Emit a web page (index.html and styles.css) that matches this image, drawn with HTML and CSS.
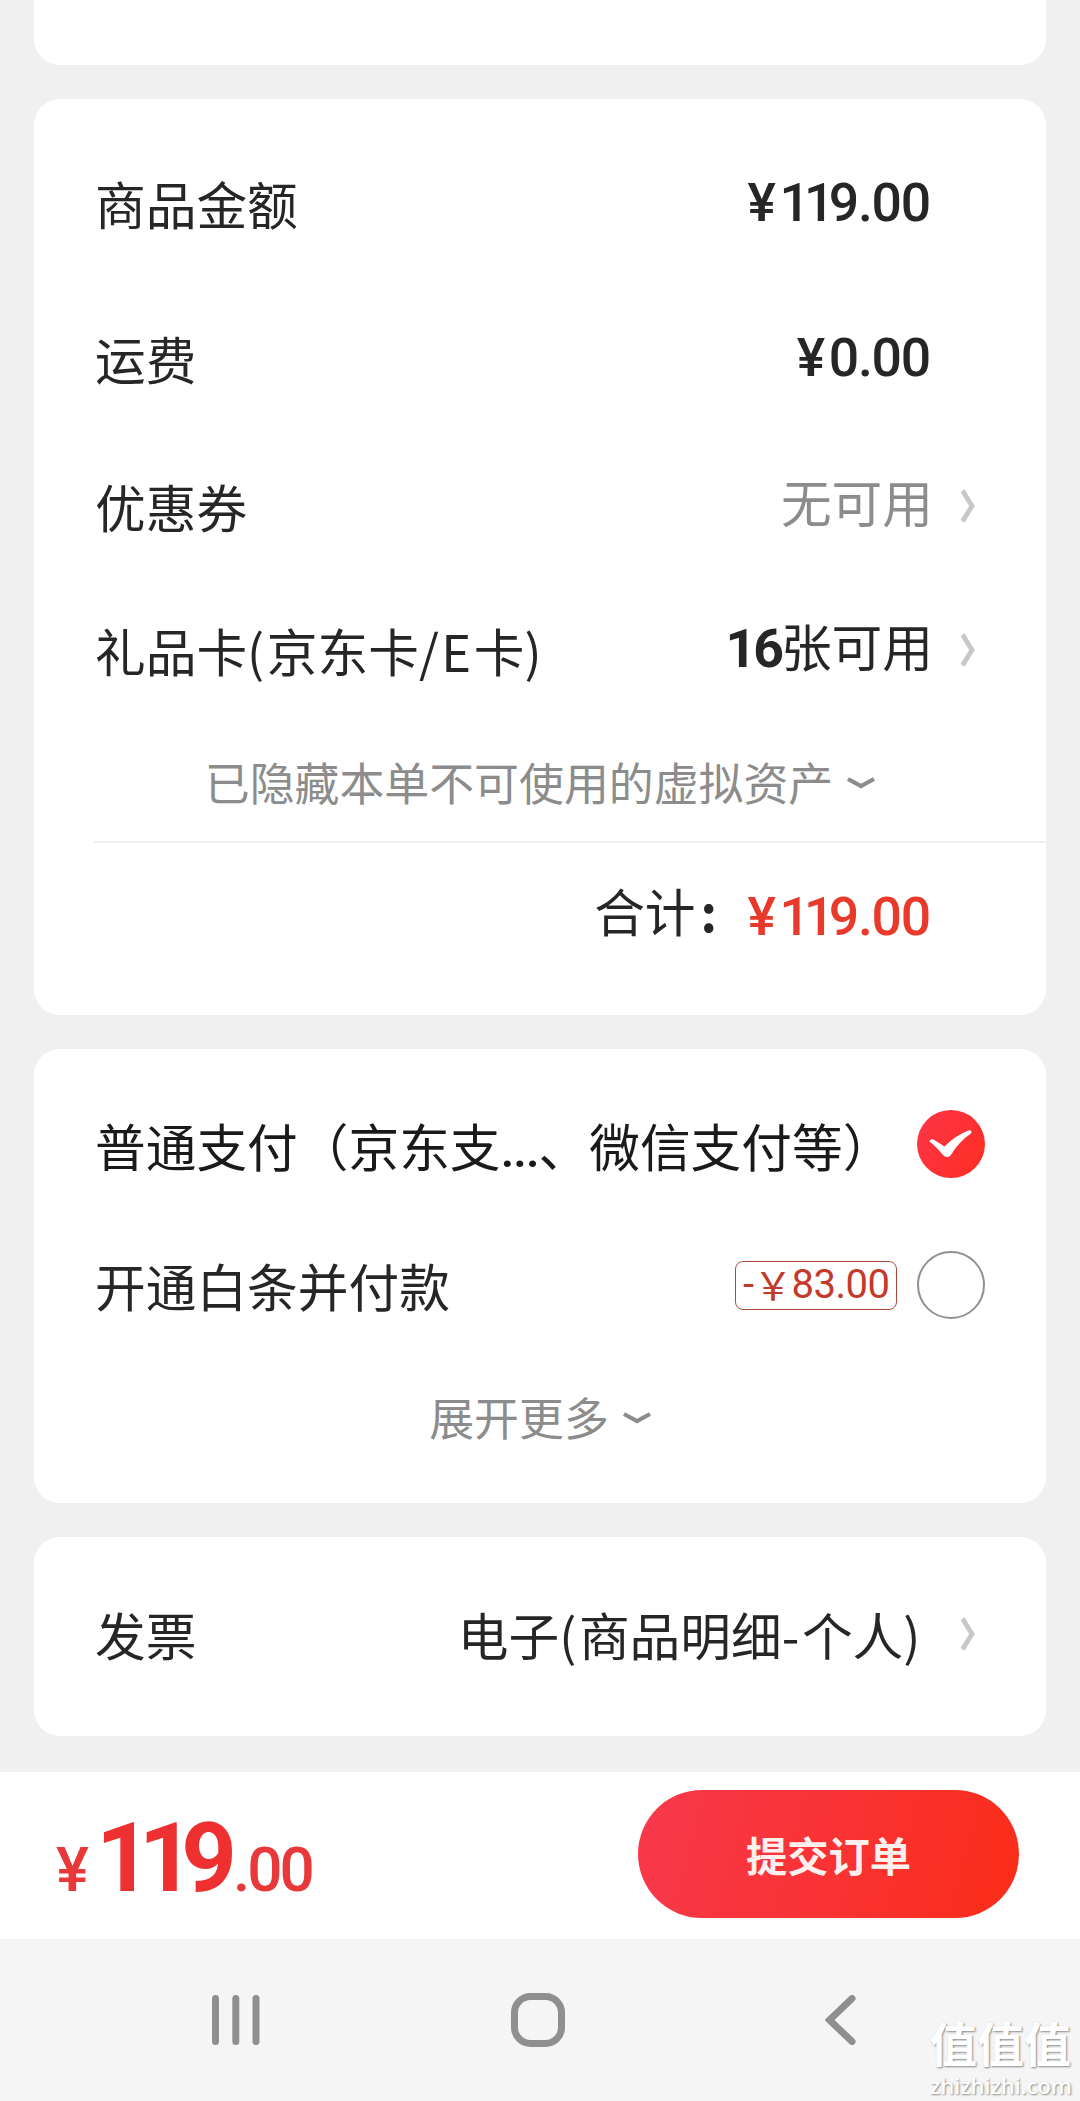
FILE: index.html
```html
<!DOCTYPE html>
<html lang="zh-CN">
<head>
<meta charset="utf-8">
<title>提交订单</title>
<link rel="stylesheet" href="styles.css">
</head>
<body>
<main class="page">
  <section class="card card-top"></section>

  <section class="card card-amount">
    <div class="row row-goods">
      <span class="label">商品金额</span>
      <span class="value price"><span class="sign">¥</span><span class="ones">11</span>9.00</span>
    </div>
    <div class="row row-freight">
      <span class="label">运费</span>
      <span class="value price"><span class="sign">¥</span>0.00</span>
    </div>
    <div class="row row-coupon">
      <span class="label">优惠券</span>
      <span class="value muted">无可用</span>
      <svg class="chevron" viewBox="0 0 14 34"><path d="M1.5 1.5 11 17 1.5 32.5"/></svg>
    </div>
    <div class="row row-gift">
      <span class="label">礼品卡<span class="latin">(</span>京东卡<span class="latin">/E</span>卡<span class="latin">)</span></span>
      <span class="value"><span class="count">16</span>张可用</span>
      <svg class="chevron" viewBox="0 0 14 34"><path d="M1.5 1.5 11 17 1.5 32.5"/></svg>
    </div>
    <div class="more more-assets">
      <span>已隐藏本单不可使用的虚拟资产</span>
      <svg class="caret" viewBox="0 0 28 12"><path d="M1 2 14 9 27 2"/></svg>
    </div>
    <hr class="divider">
    <div class="total">
      <span class="total-label">合计</span><span class="colon">:</span>
      <span class="price total-price"><span class="sign">¥</span><span class="ones">11</span>9.00</span>
    </div>
  </section>

  <section class="card card-pay">
    <div class="pay pay-normal">
      <span class="label dark">普通支付（京东支<span class="dots">...</span>、微信支付等）</span>
      <svg class="radio" viewBox="0 0 68 68">
        <defs>
          <linearGradient id="on" x1="0" y1="0" x2="1" y2="0.5">
            <stop offset="0" stop-color="#fb3448"/>
            <stop offset="1" stop-color="#ff2f28"/>
          </linearGradient>
        </defs>
        <circle cx="34" cy="34" r="34" fill="url(#on)"/>
        <path fill="#fff" d="M12.5 31.500Q13 28.500 16.500 29.500L27.500 36.500Q38 25.500 52 20.200Q55.500 19.800 54 23.500Q43 30.500 33.500 45.500Q30.500 48.500 26.500 45.500Q18.500 36 12.500 31.500Z"/>
      </svg>
    </div>
    <div class="pay pay-credit">
      <span class="label">开通白条并付款</span>
      <span class="badge"><span>-</span><span class="yuan">￥</span><span>83.00</span></span>
      <span class="radio radio-off"></span>
    </div>
    <div class="more more-pay">
      <span>展开更多</span>
      <svg class="caret" viewBox="0 0 28 12"><path d="M1 2 14 9 27 2"/></svg>
    </div>
  </section>

  <section class="card card-invoice">
    <span class="label">发票</span>
    <span class="value invoice">电子<span class="latin">(</span>商品明细<span class="latin">-</span>个人<span class="latin">)</span></span>
    <svg class="chevron" viewBox="0 0 14 34"><path d="M1.5 1.5 11 17 1.5 32.5"/></svg>
  </section>
</main>

<footer class="checkout">
  <div class="sum"><span class="sum-sign">¥</span><span class="sum-main"><span class="sum-ones">11</span>9</span><span class="sum-cents">.00</span></div>
  <button class="submit" type="button">提交订单</button>
</footer>

<nav class="system">
  <svg class="nav-recents" viewBox="0 0 48 50"><path d="M3.500 3.500v43M23.800 3.500v43M44 3.500v43"/></svg>
  <svg class="nav-home" viewBox="0 0 54 54"><rect x="3.500" y="3.500" width="47" height="47" rx="16"/></svg>
  <svg class="nav-back" viewBox="0 0 31 50"><path d="M27 3.500 4.500 25 27 46.500"/></svg>
  <div class="watermark"><span class="mark-name">值值值</span><span class="mark-site">zhizhizhi.com</span></div>
</nav>
</body>
</html>
```
FILE: styles.css
```css
* {
  box-sizing: border-box;
}

body {
  margin: 0;
  width: 1080px;
  background: #f0f0f0;
  color: #262626;
  font-family: "Noto Sans CJK SC", sans-serif;
  font-size: 50.7px;
  line-height: 60px;
}

svg {
  display: block;
  flex: none;
  fill: none;
}

.page {
  display: flex;
  flex-direction: column;
  gap: 34px;
  height: 1772px;
  padding: 0 34px;
}

.card {
  background: #fff;
  border-radius: 26px;
}

.card-top {
  height: 65px;
  border-radius: 0 0 26px 26px;
}

.card-amount {
  height: 916px;
  padding-top: 30px;
}

.row,
.pay {
  display: flex;
  align-items: center;
  padding-left: 61px;
}

.row {
  padding-right: 116px;
}

.label {
  flex: 1;
  white-space: nowrap;
}

.dark {
  padding-top: 7px;
  color: #1a1a1a;
}

.value {
  white-space: nowrap;
}

.latin {
  letter-spacing: 2.6px;
}

.muted {
  color: #8c8c8c;
}

.price {
  font-family: Roboto, sans-serif;
  font-size: 53.5px;
  font-weight: 500;
  letter-spacing: -1.2px;
}

.sign {
  letter-spacing: 3.5px;
}

.ones {
  letter-spacing: -5.8px;
}

.row-goods {
  height: 148px;
}

.row-freight {
  height: 161px;
}

.row-coupon {
  height: 135px;
}

.row-gift {
  height: 154px;
}

.row-coupon,
.row-gift {
  padding-right: 71px;
}

.row-coupon .value {
  padding-bottom: 9px;
}

.row-gift .value {
  padding-bottom: 7px;
}

.count {
  font-family: Roboto, sans-serif;
  font-size: 53.5px;
  font-weight: 700;
  letter-spacing: -3px;
}

.chevron {
  width: 14px;
  height: 34px;
  margin-left: 28px;
  stroke: #c8c8c8;
  stroke-width: 4.8;
}

.caret {
  width: 28px;
  height: 12px;
  stroke: #8c8c8c;
  stroke-width: 4.2;
}

.more {
  display: flex;
  align-items: center;
  justify-content: center;
  gap: 14px;
  color: #8c8c8c;
  font-size: 44.9px;
}

.more-assets {
  height: 109px;
  margin-bottom: 5px;
}

.more .caret {
  margin-top: 2px;
}

.divider {
  height: 2px;
  margin: 0 0 0 60px;
  border: 0;
  background: #f0f0f0;
}

.total {
  display: flex;
  align-items: center;
  justify-content: flex-end;
  height: 134px;
  padding-right: 116px;
}

.colon {
  width: 52px;
  padding-left: 5px;
  font-weight: 700;
}

.total-price {
  padding-top: 13px;
  color: #e8392b;
}

.card-pay {
  height: 454px;
  padding-top: 30px;
}

.pay {
  padding-right: 61px;
}

.pay-normal {
  height: 130px;
}

.pay-credit {
  height: 152px;
}

.dots {
  display: inline-block;
  width: 38px;
  font-family: Roboto, sans-serif;
  font-weight: 500;
  letter-spacing: -1.5px;
}

.radio {
  flex: none;
  width: 68px;
  height: 68px;
}

.radio-off {
  border: 2px solid #919191;
  border-radius: 50%;
}

.badge {
  display: flex;
  align-items: center;
  width: 162px;
  height: 49px;
  margin-right: 20px;
  padding-left: 7px;
  border: 1px solid #b5483d;
  border-radius: 8px;
  color: #c43a2a;
  font-family: Roboto, sans-serif;
  font-size: 40px;
  letter-spacing: -0.5px;
}

.yuan {
  width: 38px;
  padding-bottom: 5px;
  font-family: "Noto Sans CJK SC", sans-serif;
  font-size: 39px;
}

.more-pay {
  height: 112px;
}

.card-invoice {
  display: flex;
  align-items: center;
  height: 199px;
  padding: 0 71px 5px 61px;
}

.invoice {
  margin-right: 10px;
}

.checkout {
  display: flex;
  align-items: center;
  justify-content: space-between;
  height: 167px;
  padding: 0 61px 3px 56px;
  background: #fff;
}

.sum {
  display: flex;
  align-items: baseline;
  padding-top: 19px;
  color: #e8383a;
  font-family: Roboto, sans-serif;
  font-size: 62px;
  font-weight: 500;
  line-height: 100px;
}

.sum-sign {
  width: 40px;
}

.sum-main {
  color: #ee3030;
  font-size: 97px;
  font-weight: 700;
  letter-spacing: -4px;
}

.sum-ones {
  letter-spacing: -13px;
}

.sum-cents {
  letter-spacing: -3px;
}

.submit {
  width: 381px;
  height: 128px;
  padding: 0;
  border: 0;
  border-radius: 64px;
  background: linear-gradient(105deg, #f8394c 0%, #f93232 55%, #fb2c17 100%);
  color: #fff0ee;
  font: 700 41.3px/60px "Noto Sans CJK SC", sans-serif;
}

.system {
  position: relative;
  display: flex;
  align-items: center;
  height: 162px;
  padding-left: 212px;
  background: #f5f5f5;
  stroke: #8f8f8f;
  stroke-width: 7;
  stroke-linecap: round;
  stroke-linejoin: miter;
}

.nav-recents {
  width: 48px;
  height: 50px;
}

.nav-home {
  width: 54px;
  height: 54px;
  margin-left: 251px;
}

.nav-back {
  width: 31px;
  height: 50px;
  margin-left: 260px;
}

.watermark {
  position: absolute;
  right: 8px;
  bottom: 4px;
  display: flex;
  flex-direction: column;
  gap: 6px;
  width: 142px;
  color: #fff;
  white-space: nowrap;
  text-shadow: 1px 1px 2px #888;
}

.mark-name {
  font-size: 47px;
  font-weight: 700;
  line-height: 50px;
}

.mark-site {
  font-family: "Noto Sans", sans-serif;
  font-size: 22px;
  font-weight: 500;
  line-height: 24px;
}
```
